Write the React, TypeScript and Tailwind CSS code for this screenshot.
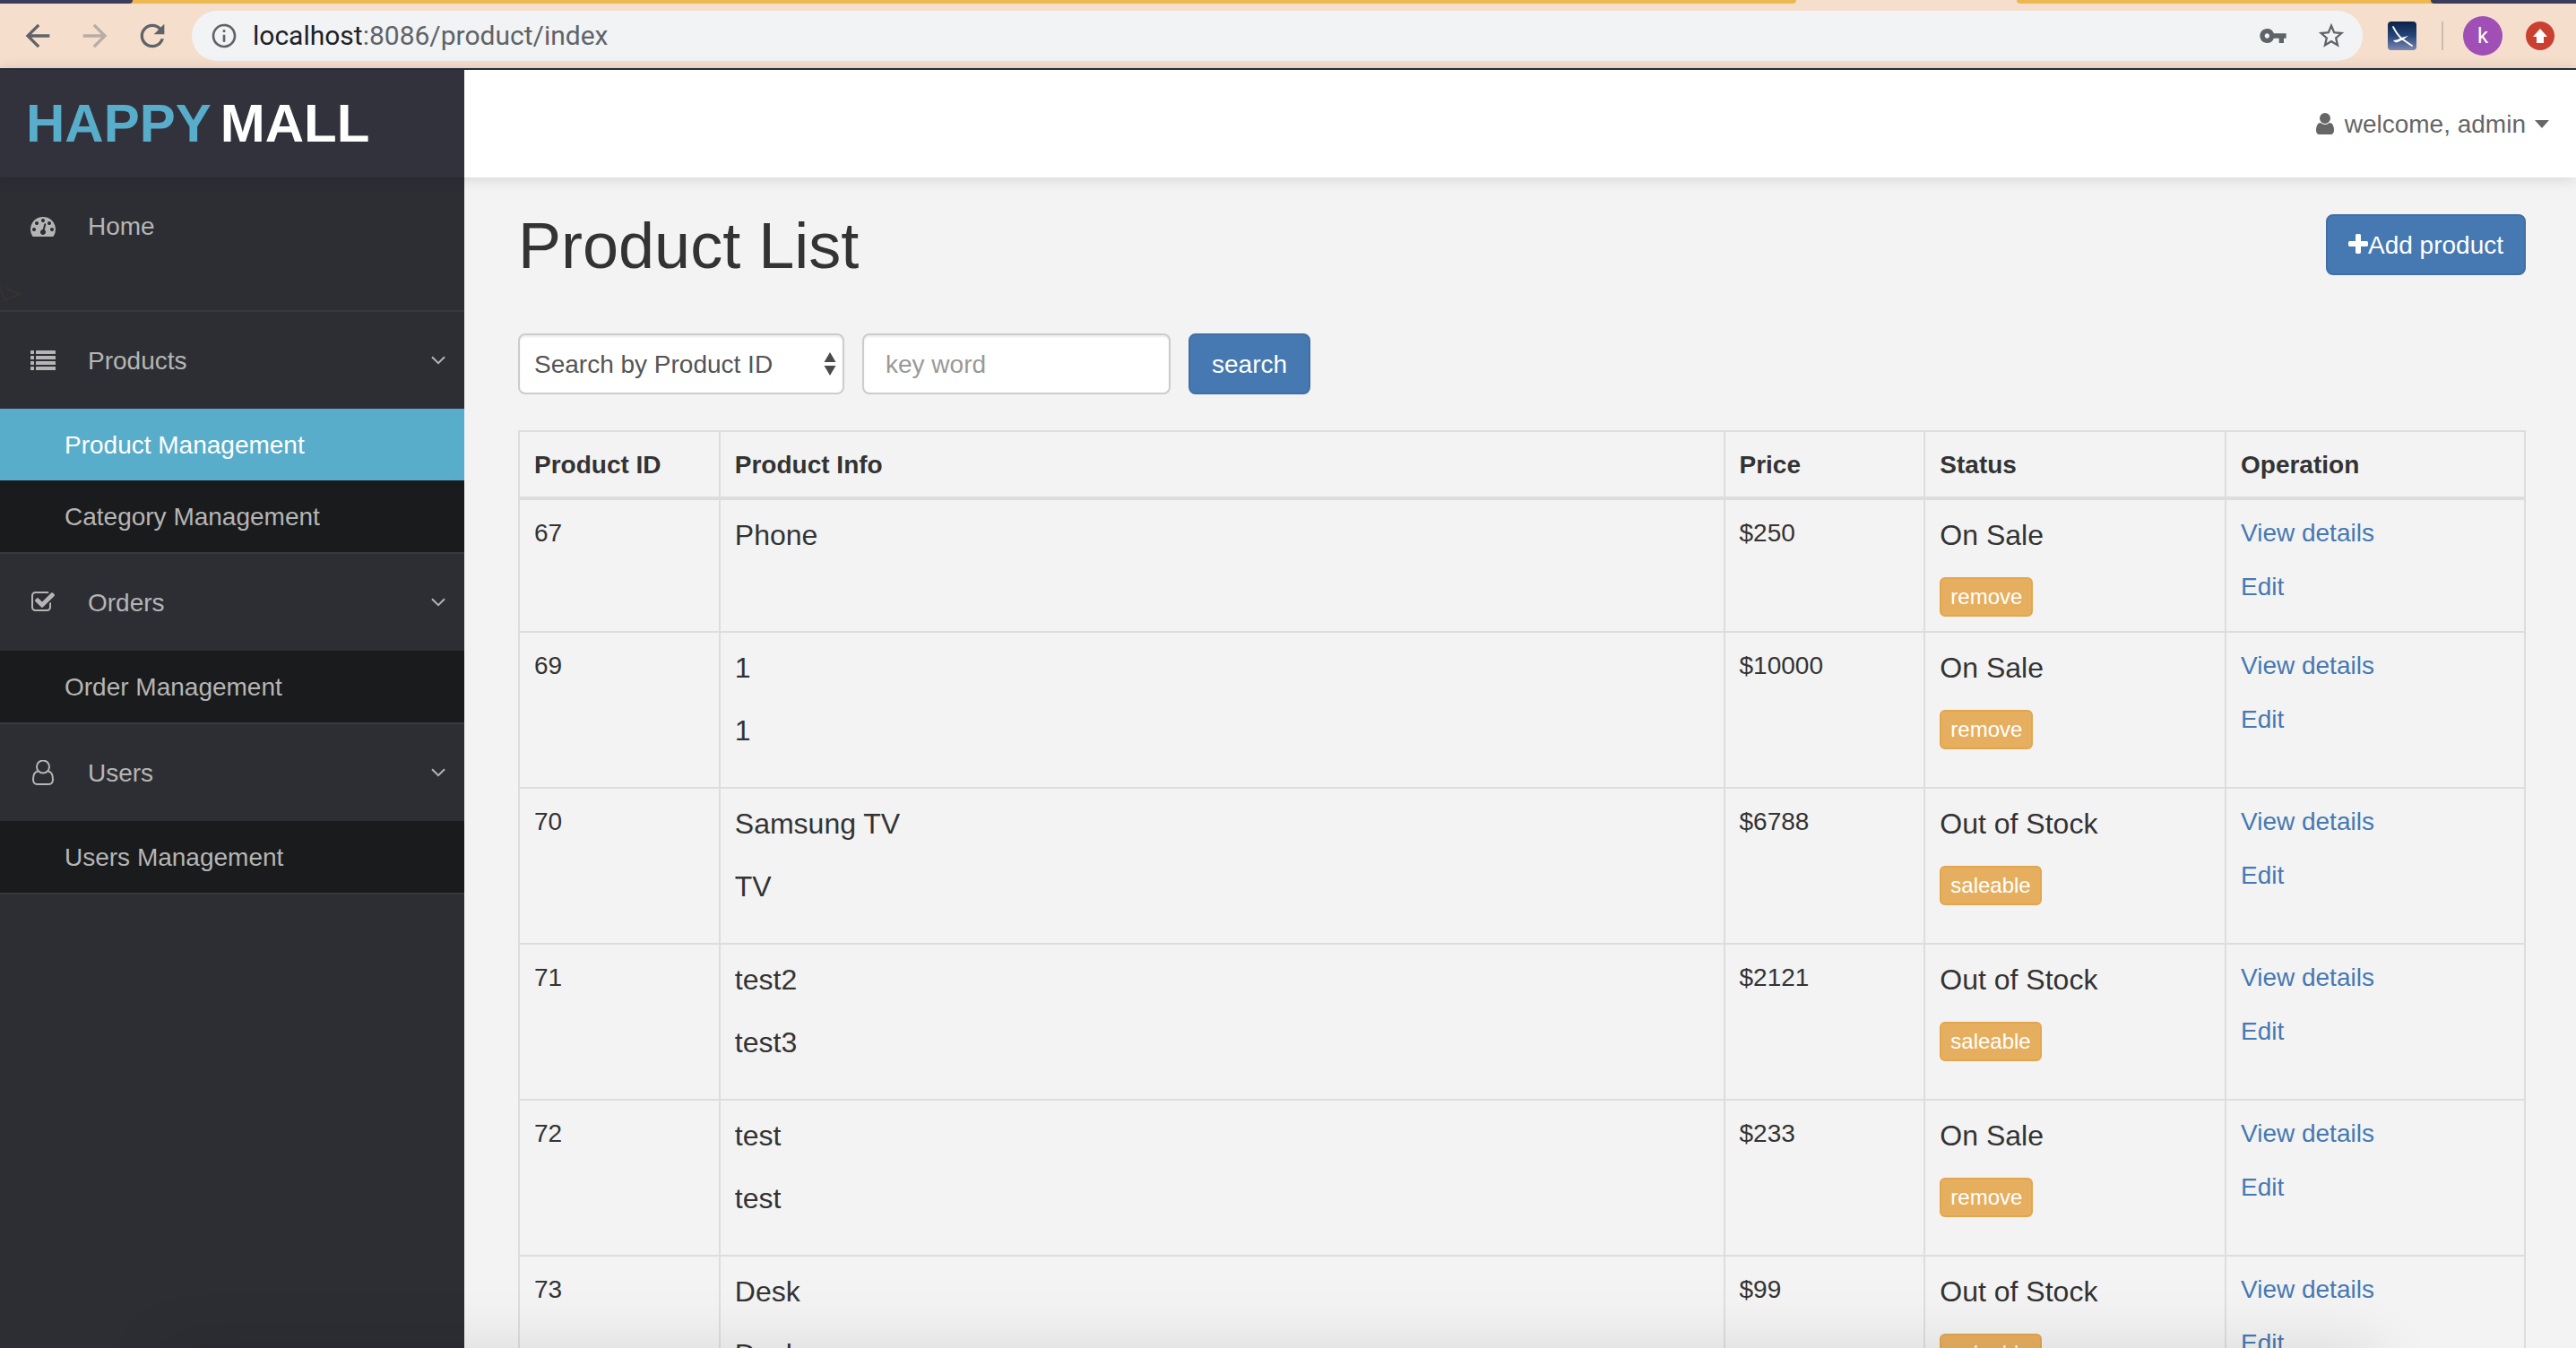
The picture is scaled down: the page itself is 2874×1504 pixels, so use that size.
import type { ReactNode } from "react";
import {
  MdArrowBack,
  MdArrowForward,
  MdInfoOutline,
  MdRefresh,
  MdStarBorder,
  MdVpnKey,
} from "react-icons/md";

type Product = {
  id: number;
  name: string;
  subtitle?: string;
  price: string;
  onSale: boolean;
};

const products: Product[] = [
  { id: 67, name: "Phone", price: "$250", onSale: true },
  { id: 69, name: "1", subtitle: "1", price: "$10000", onSale: true },
  { id: 70, name: "Samsung TV", subtitle: "TV", price: "$6788", onSale: false },
  { id: 71, name: "test2", subtitle: "test3", price: "$2121", onSale: false },
  { id: 72, name: "test", subtitle: "test", price: "$233", onSale: true },
  { id: 73, name: "Desk", subtitle: "Desk", price: "$99", onSale: false },
];

function Glyph({ d, className }: { d: string; className: string }) {
  return (
    <svg viewBox="0 0 1792 1792" fill="currentColor" className={className} aria-hidden="true">
      <path d={d} />
    </svg>
  );
}

const USER =
  "M1536 1399q0 109-62.5 187t-150.5 78h-854q-88 0-150.5-78t-62.5-187q0-85 8.5-160.5t31.5-152 58.5-131 94-89 134.5-34.5q131 128 313 128t313-128q76 0 134.5 34.5t94 89 58.5 131 31.5 152 8.5 160.5zm-256-887q0 159-112.5 271.5t-271.5 112.5-271.5-112.5-112.5-271.5 112.5-271.5 271.5-112.5 271.5 112.5 112.5 271.5z";
const PLUS =
  "M1600 736v192q0 40-28 68t-68 28h-416v416q0 40-28 68t-68 28h-192q-40 0-68-28t-28-68v-416h-416q-40 0-68-28t-28-68v-192q0-40 28-68t68-28h416v-416q0-40 28-68t68-28h192q40 0 68 28t28 68v416h416q40 0 68 28t28 68z";
const DASHBOARD =
  "M384 1152q0-53-37.5-90.5t-90.5-37.5-90.5 37.5-37.5 90.5 37.5 90.5 90.5 37.5 90.5-37.5 37.5-90.5zm192-448q0-53-37.5-90.5t-90.5-37.5-90.5 37.5-37.5 90.5 37.5 90.5 90.5 37.5 90.5-37.5 37.5-90.5zm428 481l101-382q6-26-7.5-48.5t-38.5-29.5-48 6.5-30 39.5l-101 382q-60 5-107 43.5t-63 98.5q-20 77 20 146t117 89 146-20 89-117q16-60-6-117t-72-91zm660-33q0-53-37.5-90.5t-90.5-37.5-90.5 37.5-37.5 90.5 37.5 90.5 90.5 37.5 90.5-37.5 37.5-90.5zm-640-640q0-53-37.5-90.5t-90.5-37.5-90.5 37.5-37.5 90.5 37.5 90.5 90.5 37.5 90.5-37.5 37.5-90.5zm448 192q0-53-37.5-90.5t-90.5-37.5-90.5 37.5-37.5 90.5 37.5 90.5 90.5 37.5 90.5-37.5 37.5-90.5zm320 448q0 261-141 483-19 29-54 29h-1402q-35 0-54-29-141-221-141-483 0-182 71-348t191-286 286-191 348-71 348 71 286 191 191 286 71 348z";
const CHECK_SQUARE =
  "M1472 930v318q0 119-84.5 203.5t-203.5 84.5h-832q-119 0-203.5-84.5t-84.5-203.5v-832q0-119 84.5-203.5t203.5-84.5h832q63 0 117 25 15 7 18 23 3 17-9 29l-49 49q-10 10-23 10-3 0-9-2-23-6-45-6h-832q-66 0-113 47t-47 113v832q0 66 47 113t113 47h832q66 0 113-47t47-113v-254q0-13 9-22l64-64q10-10 23-10 6 0 12 3 20 8 20 29zm231-489l-814 814q-24 24-57 24t-57-24l-430-430q-24-24-24-57t24-57l110-110q24-24 57-24t57 24l263 263 647-647q24-24 57-24t57 24l110 110q24 24 24 57t-24 57z";

function ListIcon() {
  return (
    <svg viewBox="0 0 28 28" fill="currentColor" className="size-7" aria-hidden="true">
      {[3, 9, 15, 21].map((y) => (
        <g key={y}>
          <rect x="0" y={y} width="4" height="4" rx="0.5" />
          <rect x="6" y={y} width="22" height="4" rx="0.5" />
        </g>
      ))}
    </svg>
  );
}

function UserOutlineIcon() {
  return (
    <svg viewBox="0 0 28 28" fill="none" stroke="currentColor" strokeWidth="2" className="size-7" aria-hidden="true">
      <circle cx="14" cy="7.5" r="7" />
      <path d="M8.4 12.6C4.6 13.2 3 17 3 21.5C3 24.8 4.8 27 7.5 27H20.5C23.2 27 25 24.8 25 21.5C25 17 23.4 13.2 19.6 12.6" />
    </svg>
  );
}

function ChevronDown() {
  return (
    <svg viewBox="0 0 16 10" fill="none" stroke="currentColor" strokeWidth="2" className="h-[10px] w-4" aria-hidden="true">
      <path d="M1 1.2L8 8.2L15 1.2" />
    </svg>
  );
}

function BrowserBar() {
  return (
    <div className="border-b-2 border-[#28303c] bg-[#f6decd]">
      <div className="flex h-1">
        <div className="w-[148px] bg-[#edb84f]">
          <div className="h-1 rounded-br-[8px] bg-[#3b3b5b]" />
        </div>
        <div className="flex-1 rounded-br-[8px] bg-[#edb84f]" />
        <div className="w-[246px]" />
        <div className="w-[462px] rounded-bl-[8px] bg-[#edb84f]" />
        <div className="w-[162px] bg-[#edb84f]">
          <div className="h-1 rounded-bl-[8px] bg-[#3b3b5b]" />
        </div>
      </div>
      <div className="flex h-[72px] items-center pr-6 pl-[22px] text-[#5f6368]">
        <button type="button" aria-label="Back">
          <MdArrowBack className="size-10" />
        </button>
        <button type="button" aria-label="Forward" className="ml-6 opacity-40">
          <MdArrowForward className="size-10" />
        </button>
        <button type="button" aria-label="Reload" className="ml-6">
          <MdRefresh className="size-10" />
        </button>
        <div className="ml-6 flex h-14 flex-1 items-center rounded-full bg-[#f1f3f5] pr-[18px] pl-5 font-[Roboto,sans-serif] text-[30px]">
          <MdInfoOutline className="size-8" />
          <p className="ml-4 flex-1">
            <span className="text-[#202124]">localhost</span>:8086/product/index
          </p>
          <button type="button" aria-label="Saved passwords">
            <MdVpnKey className="size-8" />
          </button>
          <button type="button" aria-label="Bookmark" className="ml-8">
            <MdStarBorder className="size-[34px]" />
          </button>
        </div>
        <svg viewBox="0 0 32 32" className="ml-7 size-8" role="img" aria-label="Extension">
          <defs>
            <linearGradient id="dusk" x1="0" y1="0" x2="0" y2="1">
              <stop offset="0" stopColor="#0a2246" />
              <stop offset="0.5" stopColor="#27457a" />
              <stop offset="1" stopColor="#7d88b0" />
            </linearGradient>
          </defs>
          <rect width="32" height="32" rx="4" fill="url(#dusk)" />
          <path d="M6 6C9 12 13 17 16 19.5L27 27" fill="none" stroke="#fff" strokeWidth="1.8" strokeLinecap="round" />
          <path d="M6 21L10 20.5L17 17.5L23 16L17.5 20L10 23.5L8 23Z" fill="#fff" />
        </svg>
        <div className="ml-7 h-8 w-[2px] bg-[#cbbcb0]" />
        <button
          type="button"
          className="ml-[22px] flex size-11 items-center justify-center rounded-full bg-[#9f4fb6] font-[Roboto,sans-serif] text-2xl text-white"
        >
          k
        </button>
        <button
          type="button"
          aria-label="Update"
          className="ml-[26px] flex size-8 items-center justify-center rounded-full bg-[#c94031]"
        >
          <svg viewBox="0 0 16 16" className="size-4" fill="#fff" aria-hidden="true">
            <path d="M8 0L16 9H12V16H4V9H0Z" />
          </svg>
        </button>
      </div>
    </div>
  );
}

function MenuHead({ icon, label }: { icon: ReactNode; label: string }) {
  return (
    <button type="button" className="flex h-[108px] w-full items-center pr-[21px] pl-[34px] text-left">
      {icon}
      <span className="ml-9 flex-1 pt-0.5">{label}</span>
      <ChevronDown />
    </button>
  );
}

function MenuLink({ label, active = false }: { label: string; active?: boolean }) {
  return (
    <a
      href="#"
      className={
        active
          ? "flex h-20 items-center bg-[#58adca] pt-0.5 pl-[72px] text-white"
          : "flex h-20 items-center bg-[#1a1b1c] pt-0.5 pl-[72px]"
      }
    >
      {label}
    </a>
  );
}

function Sidebar() {
  return (
    <nav className="w-[518px] shrink-0 bg-[#2d2e33] text-[#b5b5b5]">
      <ul>
        <li className="border-b-2 border-[#38393f]">
          <a href="#" className="flex h-[108px] items-center pl-[34px]">
            <Glyph d={DASHBOARD} className="size-7" />
            <span className="ml-9 pt-0.5">Home</span>
          </a>
          <svg viewBox="0 0 40 40" className="size-10" fill="none" stroke="#34332f" strokeWidth="2.5" aria-hidden="true">
            <path d="M0 13L5 29L22 22L7 16" />
          </svg>
        </li>
        <li className="border-b-2 border-[#38393f]">
          <MenuHead icon={<ListIcon />} label="Products" />
          <MenuLink label="Product Management" active />
          <MenuLink label="Category Management" />
        </li>
        <li className="border-b-2 border-[#38393f]">
          <MenuHead icon={<Glyph d={CHECK_SQUARE} className="size-7" />} label="Orders" />
          <MenuLink label="Order Management" />
        </li>
        <li className="border-b-2 border-[#38393f]">
          <MenuHead icon={<UserOutlineIcon />} label="Users" />
          <MenuLink label="Users Management" />
        </li>
      </ul>
    </nav>
  );
}

function ProductRow({ product }: { product: Product }) {
  return (
    <tr className="align-top">
      <td className="border-2 border-[#ddd] px-4 pt-[17px]">{product.id}</td>
      <td className="border-2 border-[#ddd] p-4 text-[32px] leading-[46px]">
        <p className="mb-6">{product.name}</p>
        {product.subtitle && <p className="mb-6">{product.subtitle}</p>}
      </td>
      <td className="border-2 border-[#ddd] px-4 pt-[17px]">{product.price}</td>
      <td className="border-2 border-[#ddd] p-4">
        <p className="mb-6 text-[32px] leading-[46px]">{product.onSale ? "On Sale" : "Out of Stock"}</p>
        <button
          type="button"
          className="block h-11 rounded-md border-2 border-[#e3a54d] bg-[#e6af5f] px-[10px] text-2xl leading-10 text-white"
        >
          {product.onSale ? "remove" : "saleable"}
        </button>
      </td>
      <td className="border-2 border-[#ddd] px-4 pt-[17px] text-[#4679b2]">
        <a href="#" className="mb-5 block">
          View details
        </a>
        <a href="#" className="block">
          Edit
        </a>
      </td>
    </tr>
  );
}

export default function App() {
  return (
    <div className="relative flex h-screen flex-col overflow-hidden bg-[#f3f3f3] font-['Liberation_Sans',Arial,sans-serif] text-[28px] leading-10 text-[#333]">
      <BrowserBar />
      <header className="z-10 flex h-[120px] shrink-0 bg-white shadow-[0_0_16px_rgba(0,0,0,0.15)]">
        <a
          href="#"
          className="flex w-[518px] items-center gap-[10px] bg-[#32323c] pl-[29px] text-[60px] font-bold text-white"
        >
          <span className="text-[#58adca]">HAPPY</span>
          <span>MALL</span>
        </a>
        <button type="button" className="ml-auto flex items-center pr-[30px] text-[#666]">
          <Glyph d={USER} className="size-7" />
          <span className="ml-2 pt-0.5">welcome, admin</span>
          <svg viewBox="0 0 16 9" className="ml-[10px] h-[9px] w-4" fill="currentColor" aria-hidden="true">
            <path d="M0 0H16L8 9Z" />
          </svg>
        </button>
      </header>
      <div className="flex min-h-0 flex-1">
        <Sidebar />
        <main className="flex-1 pt-10 pr-14 pl-[60px]">
          <div className="flex items-center justify-between">
            <h1 className="pt-0.5 text-[72px] leading-[68px]">Product List</h1>
            <button
              type="button"
              className="flex h-[68px] items-center rounded-lg border-2 border-[#416fa5] bg-[#4679b2] px-[23px] text-white"
            >
              <svg viewBox="192 0 1408 1792" fill="currentColor" className="h-7 w-[22px]" aria-hidden="true">
                <path d={PLUS} />
              </svg>
              <span className="pt-0.5">Add product</span>
            </button>
          </div>
          <form className="mt-16 flex gap-5" onSubmit={(e) => e.preventDefault()}>
            <div className="relative">
              <select
                aria-label="Search by"
                className="h-[68px] w-[364px] appearance-none rounded-lg border-2 border-[#ccc] bg-white pt-0.5 pl-4 text-[#555] shadow-[inset_0_2px_2px_rgba(0,0,0,0.075)]"
              >
                <option>Search by Product ID</option>
                <option>Search by Product Name</option>
              </select>
              <svg
                viewBox="0 0 14 26"
                className="pointer-events-none absolute top-[21px] right-[9px] h-[26px] w-[14px] text-[#4a4a4a]"
                fill="currentColor"
                aria-hidden="true"
              >
                <path d="M7 0L13.5 11H0.5ZM7 26L13.5 15H0.5Z" />
              </svg>
            </div>
            <input
              type="text"
              aria-label="Key word"
              placeholder="key word"
              className="h-[68px] w-[344px] rounded-lg border-2 border-[#ccc] bg-white px-6 pt-0.5 text-[#555] shadow-[inset_0_2px_2px_rgba(0,0,0,0.075)] placeholder:text-[#999]"
            />
            <button
              type="submit"
              className="h-[68px] rounded-lg border-2 border-[#416fa5] bg-[#4679b2] px-6 pt-0.5 text-white"
            >
              search
            </button>
          </form>
          <table className="mt-10 w-full table-fixed border-collapse">
            <thead>
              <tr className="text-left">
                <th className="w-[10%] border-2 border-b-4 border-[#ddd] px-4 pt-[17px] pb-[15px]">Product ID</th>
                <th className="border-2 border-b-4 border-[#ddd] px-4 pt-[17px] pb-[15px]">Product Info</th>
                <th className="w-[10%] border-2 border-b-4 border-[#ddd] px-4 pt-[17px] pb-[15px]">Price</th>
                <th className="w-[15%] border-2 border-b-4 border-[#ddd] px-4 pt-[17px] pb-[15px]">Status</th>
                <th className="w-[334px] border-2 border-b-4 border-[#ddd] px-4 pt-[17px] pb-[15px]">Operation</th>
              </tr>
            </thead>
            <tbody>
              {products.map((product) => (
                <ProductRow key={product.id} product={product} />
              ))}
            </tbody>
          </table>
        </main>
      </div>
      <div className="pointer-events-none absolute inset-x-0 -bottom-40 z-20 mr-[220px] ml-[180px] h-40 shadow-[0_0_70px_rgba(0,0,0,0.11)]" />
    </div>
  );
}
